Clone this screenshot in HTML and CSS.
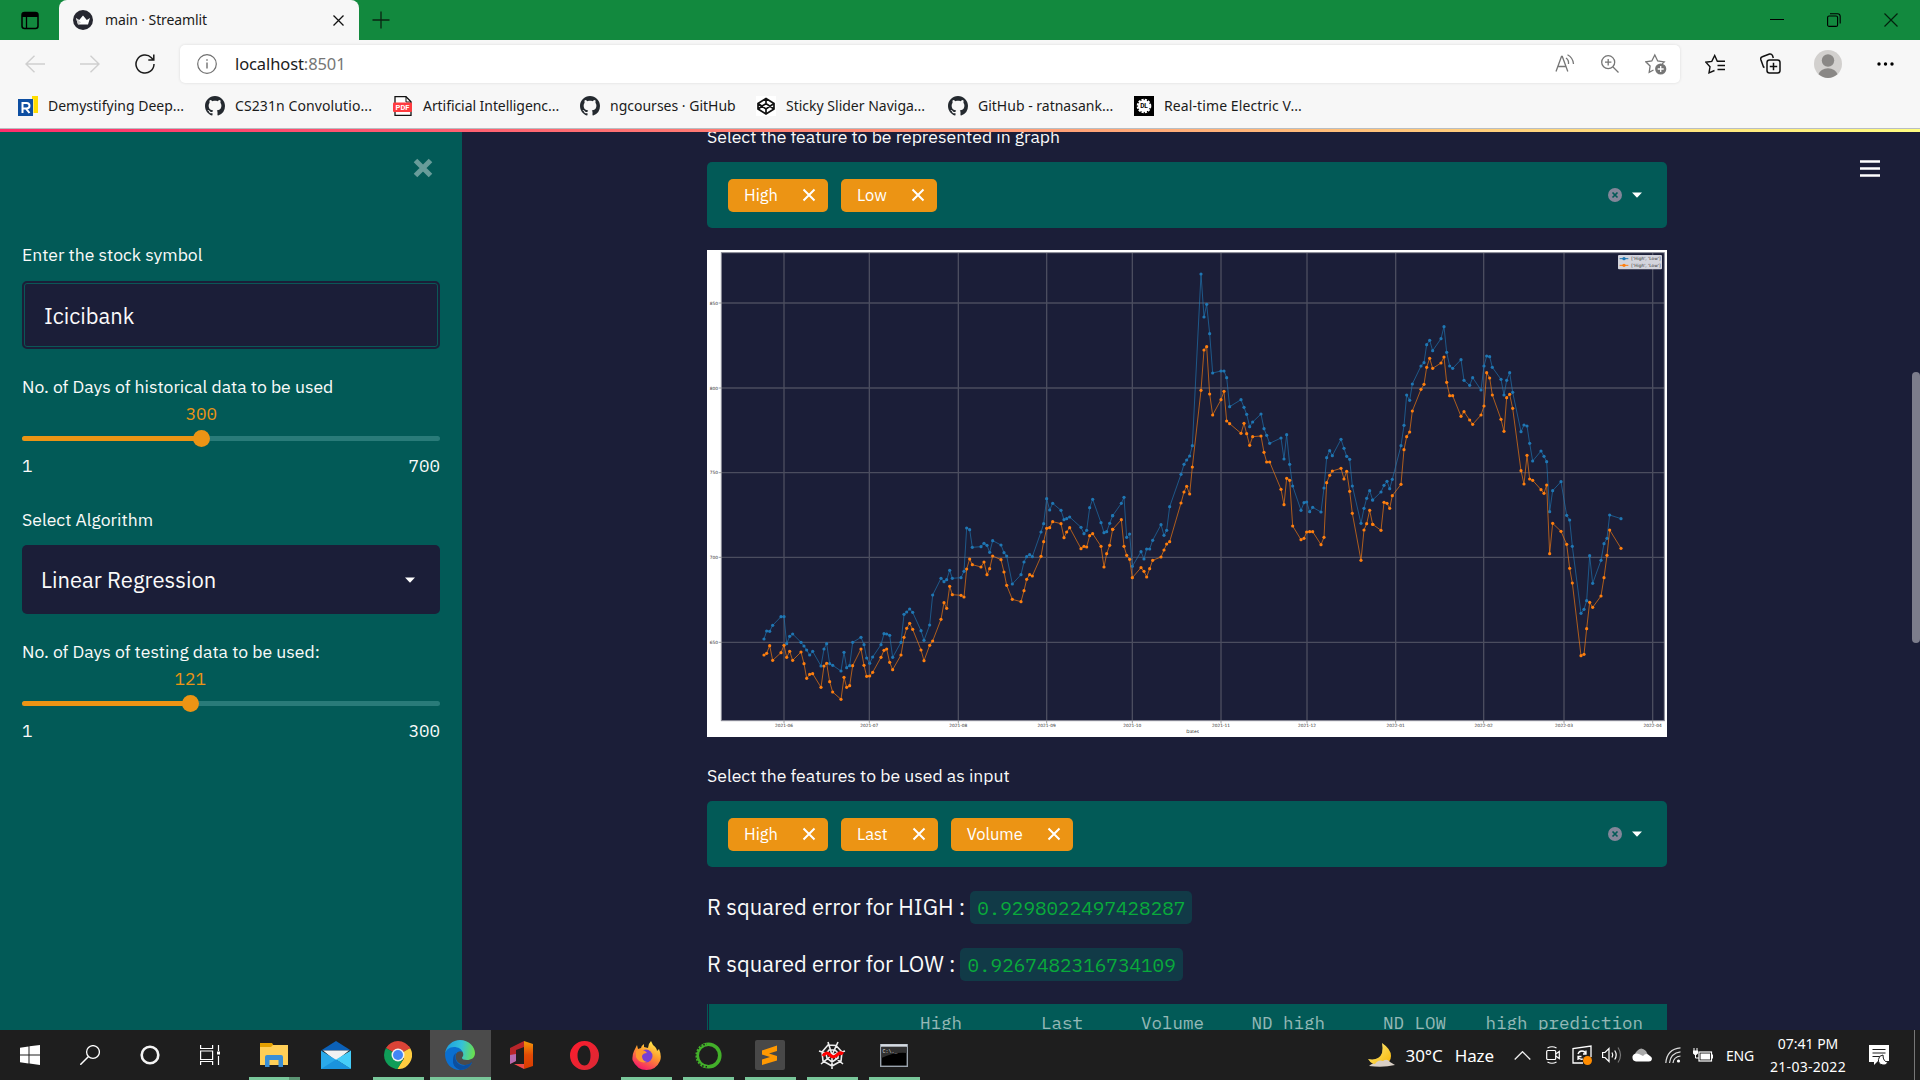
FILE: index.html
```html
<!DOCTYPE html>
<html lang="en">
<head>
<meta charset="utf-8">
<title>main · Streamlit</title>
<link rel="stylesheet" href="styles.css">
</head>
<body>
<svg class="defs" width="0" height="0">
  <defs>
    <symbol id="github" viewBox="0 0 16 16"><path fill="#24292f" d="M8 0C3.58 0 0 3.58 0 8c0 3.54 2.29 6.53 5.47 7.59.4.07.55-.17.55-.38 0-.19-.01-.82-.01-1.49-2.01.37-2.53-.49-2.69-.94-.09-.23-.48-.94-.82-1.13-.28-.15-.68-.52-.01-.53.63-.01 1.08.58 1.23.82.72 1.21 1.87.87 2.33.66.07-.52.28-.87.51-1.07-1.78-.2-3.64-.89-3.64-3.95 0-.87.31-1.59.82-2.15-.08-.2-.36-1.02.08-2.12 0 0 .67-.21 2.2.82.64-.18 1.32-.27 2-.27s1.36.09 2 .27c1.53-1.04 2.2-.82 2.2-.82.44 1.1.16 1.92.08 2.12.51.56.82 1.27.82 2.15 0 3.07-1.87 3.75-3.65 3.95.29.25.54.73.54 1.48 0 1.07-.01 1.93-.01 2.2 0 .21.15.46.55.38A8.01 8.01 0 0 0 16 8c0-4.42-3.58-8-8-8z"/></symbol>
    <symbol id="cross" viewBox="0 0 14 14"><path d="M1.500 1.500l11 11M12.500 1.500l-11 11" stroke="#fff" stroke-width="2" fill="none"/></symbol>
    <symbol id="clear" viewBox="0 0 14 14"><circle cx="7" cy="7" r="7" fill="#838699"/><path d="M4.500 4.500l5 5M9.500 4.500l-5 5" stroke="#025a57" stroke-width="1.700"/></symbol>
    <marker id="dot-high" markerUnits="userSpaceOnUse" markerWidth="12" markerHeight="12" refX="6" refY="6"><circle cx="6" cy="6" r="4.800" fill="#1f77b4"/></marker>
    <marker id="dot-low" markerUnits="userSpaceOnUse" markerWidth="12" markerHeight="12" refX="6" refY="6"><circle cx="6" cy="6" r="4.800" fill="#ff7f0e"/></marker>
    <linearGradient id="edge-a" x1="0" y1="0.3" x2="1" y2="0.4"><stop offset="0" stop-color="#1b9de2"/><stop offset=".55" stop-color="#35c1d8"/><stop offset="1" stop-color="#6ae04d"/></linearGradient>
    <linearGradient id="fire" x1="0.8" y1="0" x2="0.3" y2="1"><stop offset="0" stop-color="#fff44f"/><stop offset=".45" stop-color="#ff9a2e"/><stop offset="1" stop-color="#f5156c"/></linearGradient>
    <linearGradient id="office-g" x1="0" y1="0" x2="0" y2="1"><stop offset="0" stop-color="#f59a0a"/><stop offset=".5" stop-color="#e24a05"/><stop offset="1" stop-color="#d83b01"/></linearGradient>
    <linearGradient id="opera-g" x1="0" y1="0" x2="1" y2="1"><stop offset="0" stop-color="#ff1b2d"/><stop offset="1" stop-color="#d92a35"/></linearGradient>
    <linearGradient id="moon-g" x1="0" y1="0" x2="1" y2="1"><stop offset="0" stop-color="#fff08a"/><stop offset="1" stop-color="#f7b500"/></linearGradient>
  </defs>
</svg>

<header class="browser">
  <div class="titlebar">
    <div class="workspaces"><svg width="18" height="19" viewBox="0 0 18 19"><rect x="1" y="1.500" width="16" height="16" rx="2.500" fill="none" stroke="#000" stroke-width="1.500"/><path d="M1 6V3.500Q1 1.500 3.500 1.500h11q2.500 0 2.500 2.500V6z"/><path d="M5.500 6v11" stroke="#000" stroke-width="1.300"/></svg></div>
    <div class="tab">
      <svg width="20" height="20" viewBox="0 0 20 20"><circle cx="10" cy="10" r="10" fill="#262730"/><path d="M3 8l3.200 2L10 5.500l3.800 4.500L17 8l-2 6.500H5z" fill="#fff"/><path d="M5 14.500L3 8l5 4.500z" fill="#ccc"/></svg>
      <span class="tab-title">main · Streamlit</span>
      <svg class="tab-x" width="11" height="11" viewBox="0 0 11 11"><path d="M.5.5l10 10M10.500.5l-10 10" stroke="#111" stroke-width="1.300"/></svg>
    </div>
    <svg class="new-tab" width="18" height="18" viewBox="0 0 18 18"><path d="M9 .5v17M.5 9h17" stroke="#0a2412" stroke-width="1.300"/></svg>
    <div class="win-buttons">
      <svg width="14" height="14" viewBox="0 0 14 14"><path d="M0 6.500h14" stroke="#000" stroke-width="1"/></svg>
      <svg width="14" height="14" viewBox="0 0 14 14"><rect x=".6" y="3" width="10" height="10.400" rx="1.500" fill="none" stroke="#000" stroke-width="1.100"/><path d="M3 .7h7.500q2.700 0 2.700 2.800v7" fill="none" stroke="#000" stroke-width="1.100"/></svg>
      <svg width="14" height="14" viewBox="0 0 14 14"><path d="M.5.5l13 13M13.500.5l-13 13" stroke="#03210d" stroke-width="1.200"/></svg>
    </div>
  </div>
  <div class="toolbar">
    <svg class="nav" width="20" height="18" viewBox="0 0 20 18"><path d="M20 9H1M9.500.7L1 9l8.500 8.300" fill="none" stroke="#cfcfcf" stroke-width="1.400"/></svg>
    <svg class="nav" width="20" height="18" viewBox="0 0 20 18"><path d="M0 9h19M10.500.7L19 9l-8.500 8.300" fill="none" stroke="#cfcfcf" stroke-width="1.400"/></svg>
    <svg class="nav" width="20" height="20" viewBox="0 0 20 20"><path d="M19 10a9 9 0 1 1-2.600-6.300L18.500 6M18.800.5V6H13.300" fill="none" stroke="#1b1b1b" stroke-width="1.500"/></svg>
    <div class="address">
      <svg width="20" height="20" viewBox="0 0 20 20"><circle cx="10" cy="10" r="9.300" fill="none" stroke="#707070" stroke-width="1.200"/><path d="M10 8.500v6M10 5.200v1.600" stroke="#707070" stroke-width="1.400"/></svg>
      <span class="url">localhost<i>:8501</i></span>
      <svg width="20" height="19" viewBox="0 0 20 19" fill="none" stroke="#767676" stroke-width="1.300"><path d="M1 17.500L6.500 2.500h.8l5.500 15M3 12.500h8M11 4q3 2 2.500 6M12.500.8q5.500 3 6 9.200"/></svg>
      <svg width="18" height="18" viewBox="0 0 18 18" fill="none" stroke="#767676" stroke-width="1.300"><circle cx="7.200" cy="7.200" r="6.500"/><path d="M12 12l5.500 5.500M7.200 4v6.400M4 7.200h6.400"/></svg>
      <svg width="22" height="22" viewBox="0 0 22 22"><path d="M8.500 17l-4.300 2.300.9-6.200L.8 8.800l6-.8L9.800 2l2.900 6 6.500.9-2 2" fill="none" stroke="#767676" stroke-width="1.300"/><circle cx="15.700" cy="16" r="5.600" fill="#767676"/><path d="M15.700 13v6M12.700 16h6" stroke="#fff" stroke-width="1.300"/></svg>
    </div>
    <svg class="act fav" width="20" height="20" viewBox="0 0 20 20" fill="none" stroke="#111" stroke-width="1.400"><path d="M9.500 16.500L4 18.800l1-6L.8 8.200l6-.8L9.700 1.500l2.600 5.700H20M12.500 11.500H20M12.500 15.500H20"/></svg>
    <svg class="act coll" width="21" height="21" viewBox="0 0 21 21" fill="none" stroke="#111" stroke-width="1.500"><path d="M4.500 14.500L3.500 14 .8 6.500q-.5-2 1.500-2.700L9.500 1q2-.5 3 1.500l.8 2.500"/><rect x="7" y="7" width="13" height="13" rx="2.500"/><path d="M13.500 9.800v7.400M9.800 13.500h7.400"/></svg>
    <svg class="act prof" width="28" height="28" viewBox="0 0 28 28"><circle cx="14" cy="14" r="14" fill="#d2d0ce"/><circle cx="14" cy="10.500" r="6.200" fill="#8a8886"/><path d="M4.500 24.300a9.700 7.500 0 0 1 19 0Q19 28 14 28t-9.500-3.700z" fill="#8a8886"/></svg>
    <svg class="act more" width="17" height="4" viewBox="0 0 17 4"><circle cx="2" cy="2" r="1.700"/><circle cx="8.500" cy="2" r="1.700"/><circle cx="15" cy="2" r="1.700"/></svg>
  </div>
  <nav class="bookmarks">
    <a><svg width="20" height="20" viewBox="0 0 20 20"><path fill="#0d4ea2" d="M0 3h15v17H0z"/><path fill="#ffdd00" d="M14 0h6v17h-4.500V3H14z"/><path d="M4.500 17V7h4q3 0 3 2.800t-3 2.800h-3M8 12.600l3.500 4.400" stroke="#fff" stroke-width="2" fill="none"/></svg><span>Demystifying Deep...</span></a>
    <a><svg width="20" height="20"><use href="#github"/></svg><span class="wide">CS231n Convolutio...</span></a>
    <a><svg width="20" height="20" viewBox="0 0 20 20"><path d="M2 .7h11l5 5v13.600H2z" fill="#fff" stroke="#111" stroke-width="1.300"/><path d="M13 .7V6h5" fill="none" stroke="#111"/><rect y="6.500" width="19" height="9.500" rx="1" fill="#ff3b3f"/><text x="9.500" y="14" class="pdf">PDF</text></svg><span class="narrow">Artificial Intelligenc...</span></a>
    <a><svg width="20" height="20"><use href="#github"/></svg><span>ngcourses · GitHub</span></a>
    <a><svg width="20" height="20" viewBox="0 0 20 20"><rect width="20" height="20" fill="#fff"/><path d="M10 2.500l8 5v5.500l-8 5-8-5V7.500zM10 2.500v5M10 13v5M2 7.500l8 5.500 8-5.500M2 13l8-5.500L18 13" fill="none" stroke="#111" stroke-width="1.700"/></svg><span>Sticky Slider Naviga...</span></a>
    <a><svg width="20" height="20"><use href="#github"/></svg><span>GitHub - ratnasank...</span></a>
    <a><svg width="20" height="20" viewBox="0 0 20 20"><rect width="20" height="20"/><circle cx="10" cy="10" r="6" fill="#fff"/><circle cx="10" cy="10" r="6.300" fill="none" stroke="#fff" stroke-width="2" stroke-dasharray="2.200 1.100"/><text x="10" y="12.400" class="dl">DL</text></svg><span class="wide">Real-time Electric V...</span></a>
  </nav>
</header>

<div class="app">
  <div class="decoration"></div>
  <aside class="sidebar">
    <svg class="close" width="20" height="20" viewBox="0 0 20 20"><path d="M2.500 2.500l15 15M17.500 2.500l-15 15" stroke="#689c9a" stroke-width="5"/></svg>
    <div class="field first">
      <div class="label">Enter the stock symbol</div>
      <div class="input">Icicibank</div>
    </div>
    <div class="field slider-field">
      <div class="label">No. of Days of historical data to be used</div>
      <div class="slider"><div class="fill" style="width:42.800%"><b>300</b></div></div>
      <div class="ticks"><span>1</span><span>700</span></div>
    </div>
    <div class="field select-field">
      <div class="label">Select Algorithm</div>
      <div class="select"><span>Linear Regression</span><svg width="10" height="6" viewBox="0 0 10 6"><path d="M0 .5h10L5 5.800z" fill="#fff"/></svg></div>
    </div>
    <div class="field slider-field">
      <div class="label">No. of Days of testing data to be used:</div>
      <div class="slider"><div class="fill" style="width:40.200%"><b>121</b></div></div>
      <div class="ticks"><span>1</span><span>300</span></div>
    </div>
  </aside>
  <main class="main">
    <div class="label top">Select the feature to be represented in graph</div>
    <div class="multi">
      <span class="tag"><span>High</span><svg width="14" height="14"><use href="#cross"/></svg></span>
      <span class="tag"><span>Low</span><svg width="14" height="14"><use href="#cross"/></svg></span>
      <span class="multi-end"><svg width="14" height="14"><use href="#clear"/></svg><svg width="10" height="6" viewBox="0 0 10 6"><path d="M0 .5h10L5 5.800z" fill="#fff"/></svg></span>
    </div>
    <svg class="chart" width="960" height="487" viewBox="0 0 2880 1461">
      <rect width="2880" height="1461" fill="#fff"/>
      <rect x="43" y="8" width="2829" height="1404" fill="#1b1e38" stroke="#8b8c98" stroke-width="3"/>
      <path class="grid" d="M231 8V1412M487 8V1412M754 8V1412M1019 8V1412M1276 8V1412M1542 8V1412M1800 8V1412M2066 8V1412M2330 8V1412M2571 8V1412M2837 8V1412M43 159H2872M43 414H2872M43 668H2872M43 922H2872M43 1177H2872"/>
      <path class="tick" d="M231 1412v8M487 1412v8M754 1412v8M1019 1412v8M1276 1412v8M1542 1412v8M1800 1412v8M2066 1412v8M2330 1412v8M2571 1412v8M2837 1412v8M35 159h8M35 414h8M35 668h8M35 922h8M35 1177h8"/>
      <g class="ylab"><text x="33" y="164">850</text><text x="33" y="419">800</text><text x="33" y="673">750</text><text x="33" y="927">700</text><text x="33" y="1182">650</text></g>
      <g class="xlab"><text x="231" y="1431">2021-06</text><text x="487" y="1431">2021-07</text><text x="754" y="1431">2021-08</text><text x="1019" y="1431">2021-09</text><text x="1276" y="1431">2021-10</text><text x="1542" y="1431">2021-11</text><text x="1800" y="1431">2021-12</text><text x="2066" y="1431">2022-01</text><text x="2330" y="1431">2022-02</text><text x="2571" y="1431">2022-03</text><text x="2837" y="1431">2022-04</text><text x="1457" y="1449">Dates</text></g>
      <g transform="translate(-21 600)">
        <polyline class="high" points="192,567 200,543 209,544 218,526 243,500 252,500 260,581 269,559 278,552 303,577 312,588 320,600 329,615 338,604 363,648 372,597 380,581 389,641 398,646 423,663 432,607 440,653 449,647 458,577 483,562 492,584 500,624 509,640 518,621 543,584 552,551 560,552 569,556 578,622 603,577 612,493 620,486 629,477 638,487 663,542 672,571 689,525 698,435 723,385 732,395 740,389 749,361 757,385 783,383 792,364 800,234 809,239 817,292 843,290 852,280 861,286 869,307 878,272 903,285 912,308 920,318 937,402 963,374 972,336 980,320 989,314 997,320 1023,246 1031,221 1040,146 1049,180 1058,160 1083,181 1092,209 1100,206 1109,201 1143,232 1152,251 1160,241 1169,173 1178,148 1203,218 1212,248 1220,245 1229,220 1238,197"/>
        <polyline class="low" points="192,615 200,610 209,587 218,631 243,608 252,586 260,622 269,604 278,631 303,606 312,641 320,685 329,673 338,671 363,712 372,648 380,640 389,695 398,726 423,748 432,682 440,712 449,707 458,647 483,597 492,646 500,679 509,678 518,667 543,622 552,601 560,597 569,637 578,659 603,615 612,562 620,535 629,520 638,538 663,600 672,632 689,586 698,573 723,508 732,458 740,475 749,409 757,434 783,436 792,441 800,357 809,327 817,344 843,351 852,336 861,374 869,356 878,318 903,329 912,366 920,406 937,448 963,455 972,422 980,388 989,374 997,378 1023,319 1031,275 1040,235 1049,233 1058,215 1083,221 1092,263 1100,246 1109,233 1143,296 1152,289 1160,291 1169,257 1178,251 1203,289 1212,351 1220,311 1229,286 1238,238"/>
      </g>
      <g transform="translate(1119 -15)">
        <polyline class="high" points="98,812 124,775 132,757 140,877 149,867 157,964 183,920 192,942 200,912 209,912 218,886 243,839 252,871 260,856 269,785 303,688 312,658 320,645 329,633 337,602 363,87 372,216 380,178 389,266 398,384 423,378 432,378 440,398 449,485 483,464 492,487 500,508 509,545 518,531 543,507 552,551 560,571 569,595 603,579 612,642 620,569 629,658 638,723 663,796 672,773 680,771 689,800 698,787 723,801 732,729 740,638 749,617 757,632 783,583 792,610 800,634 809,643 817,723 843,835 852,790 860,760 869,737 878,765"/>
        <polyline class="low" points="98,853 124,824 132,904 140,931 149,943 157,998 183,968 192,979 200,996 209,971 218,946 243,936 252,915 260,897 269,890 303,774 312,741 320,724 329,747 337,666 363,436 372,315 380,305 389,447 398,510 423,464 432,439 440,528 449,536 483,565 492,535 500,566 509,601 518,575 543,573 552,622 560,651 569,651 603,733 612,779 620,700 629,706 638,843 663,884 672,880 680,861 689,860 698,860 723,899 732,877 740,713 749,691 757,678 783,670 792,702 800,679 809,739 817,805 843,946 852,855 860,836 869,796 878,838"/>
      </g>
      <g transform="translate(1989 -15)">
        <polyline class="high" points="8,765 33,741 42,721 51,709 59,731 67,703 93,602 102,541 110,450 119,466 127,417 153,363 162,353 170,299 179,286 188,317 213,281 222,245 230,322 239,363 248,370 273,344 282,406 299,421 308,398 333,435 342,363 350,333 359,335 367,367 393,403 402,450 410,406 419,383 428,442 453,560 462,540 471,543 479,595 488,648 513,618 522,634 530,650 539,800 548,737 573,710 590,811 599,825 607,904 633,1105 642,1093 650,1067 659,932 668,1015 693,946 702,896 711,880 719,810 753,821"/>
        <polyline class="low" points="8,838 33,856 42,772 51,775 59,790 67,752 93,718 102,614 110,575 119,561 127,498 153,433 162,418 170,367 179,340 188,370 213,354 222,336 230,412 239,452 248,452 273,514 282,500 299,525 308,538 333,510 342,483 350,383 359,399 367,450 393,523 402,559 410,458 419,448 428,490 453,677 462,717 471,631 479,702 488,706 513,734 522,745 530,720 539,926 548,835 573,859 590,898 599,970 607,1014 633,1232 642,1228 650,1151 659,1072 668,1087 693,1053 702,998 711,931 719,855 753,910"/>
      </g>
      <rect x="2733" y="15" width="132" height="43" rx="3" fill="#d3d4dc"/>
      <path d="M2738 26h26" stroke="#1f77b4" stroke-width="3"/><circle cx="2751" cy="26" r="5" fill="#1f77b4"/>
      <path d="M2738 46h26" stroke="#ff7f0e" stroke-width="3"/><circle cx="2751" cy="46" r="5" fill="#ff7f0e"/>
      <g class="legend"><text x="2773" y="31">['High', 'Low']</text><text x="2773" y="51">['High', 'Low']</text></g>
    </svg>
    <div class="label second">Select the features to be used as input</div>
    <div class="multi">
      <span class="tag"><span>High</span><svg width="14" height="14"><use href="#cross"/></svg></span>
      <span class="tag"><span>Last</span><svg width="14" height="14"><use href="#cross"/></svg></span>
      <span class="tag"><span>Volume</span><svg width="14" height="14"><use href="#cross"/></svg></span>
      <span class="multi-end"><svg width="14" height="14"><use href="#clear"/></svg><svg width="10" height="6" viewBox="0 0 10 6"><path d="M0 .5h10L5 5.800z" fill="#fff"/></svg></span>
    </div>
    <p class="result"><span>R squared error for HIGH :</span><code>0.9298022497428287</code></p>
    <p class="result"><span>R squared error for LOW :</span><code>0.9267482316734109</code></p>
    <div class="table"><span></span><span>High</span><span>Last</span><span>Volume</span><span>ND high</span><span>ND LOW</span><span>high prediction</span></div>
  </main>
  <div class="menu"><svg width="20" height="18" viewBox="0 0 20 18"><path d="M0 1.500h20M0 8.500h20M0 15.500h20" stroke="#fff" stroke-width="2.500"/></svg></div>
  <div class="scrollbar"></div>
</div>

<footer class="taskbar">
  <div class="sys"><svg width="20" height="20" viewBox="0 0 20 20"><path fill="#fff" d="M0 2.800l8.500-1.300v8H0zM9.500 1.300L20 0v9.500H9.500zM0 10.500h8.500v8L0 17.200zM9.500 10.500H20V20L9.500 18.600z"/></svg></div>
  <div class="sys"><svg width="20" height="20" viewBox="0 0 20 20"><circle cx="13" cy="7" r="6.400" fill="none" stroke="#fff" stroke-width="1.300"/><path d="M8.500 11.500L.3 19.700" stroke="#fff" stroke-width="1.500"/></svg></div>
  <div class="sys"><svg width="20" height="20" viewBox="0 0 20 20"><circle cx="10" cy="10" r="8.300" fill="none" stroke="#f4f4f4" stroke-width="2.600"/></svg></div>
  <div class="sys"><svg width="20" height="20" viewBox="0 0 20 20"><path d="M.6 0v3.500h12V0M.6 20v-3.500h12V20M.6 6h12v8.500H.6zM18.500 0v6M18.500 11v9" fill="none" stroke="#fff" stroke-width="1.200"/><path fill="#fff" d="M17 6.500h3v3h-3z"/></svg></div>
  <div class="apps">
    <div class="run multi-win"><svg width="28" height="24" viewBox="0 0 28 24"><path fill="#e3a000" d="M0 0h12l2 3v3H0z"/><path fill="#ffcf57" d="M0 4h11l2-2h15v20H0z"/><path fill="#3a8fd6" d="M5 24V14q0-2 2-2h14q2 0 2 2v10h-4.500v-7h-9v7z"/></svg></div>
    <div><svg width="30" height="28" viewBox="0 0 30 28"><path fill="#0b61b8" d="M0 9.500L15 0l15 9.500z"/><path fill="#f2f2f2" d="M2 9.500h26L15 20z"/><path fill="#2aa9ea" d="M0 9.500l30 18.500H0z"/><path fill="#46cdf8" d="M30 9.500V28L15 18.500z"/><path fill="#1a93dd" d="M0 28l15-9.500L30 28z"/></svg></div>
    <div class="run"><svg width="28" height="28" viewBox="0 0 28 28"><path fill="#db4437" d="M14 14L1.900 7A14 14 0 0 1 26.100 7z"/><path fill="#0f9d58" d="M14 14L14 28A14 14 0 0 1 1.900 7z"/><path fill="#ffcd40" d="M14 14L26.100 7A14 14 0 0 1 13 28L20 17.500z"/><path fill="#db4437" d="M14 7.500h12.300L25 5H14z"/><path fill="#0f9d58" d="M19.700 17.200L13.500 28 11 27.700 14 20z"/><circle cx="14" cy="14" r="6.500" fill="#f1f1f1"/><circle cx="14" cy="14" r="5" fill="#4285f4"/></svg></div>
    <div class="run active"><svg width="30" height="30" viewBox="0 0 30 30"><path fill="#0a6fd0" d="M0 14Q2 6 10 6q7 1 8 6-5-2-7 2c-2 6 3 11 9 11q4 0 7-2-4 7-12 7C6 30 0 23 0 14z"/><path fill="#0c4f9e" d="M11 13c-3 8 4 14 10 12q4-1 6.500-3.500Q24 30 15 30q-8-3-7-10 0-5 3-7z"/><path fill="url(#edge-a)" d="M0 14C1 5 8 0 15 0c9 0 15 7 15 13 0 5-4 7-8 7-3 0-5-1-5-2s2-2 1-5c-1-4-5-6-9-6-5 0-8 3-9 7z"/></svg></div>
    <div><svg width="24" height="28" viewBox="0 0 24 28"><path fill="url(#office-g)" d="M14 0l9 3v22l-9 3z"/><path fill="#b8252a" d="M14 0v6L6 9v11l-6 3V7z"/><path fill="#b56bb0" d="M0 14l6-1v7l-6 3z"/><path fill="#ee4a4a" d="M4 23h10v5z"/></svg></div>
    <div><svg width="29" height="29" viewBox="0 0 29 29"><path fill="url(#opera-g)" fill-rule="evenodd" d="M14.500 0a14.500 14.500 0 1 0 0 29 14.500 14.500 0 1 0 0-29zm0 4.500c4 0 6 4.500 6 10s-2 10-6 10-7-4.500-7-10 3-10 7-10z"/></svg></div>
    <div class="run"><svg width="29" height="29" viewBox="0 0 29 29"><path fill="url(#fire)" d="M5 4l1 4 3-1q0-2 3-4v3l4 1q0-4 3-7l2 4q4 3 4 6l2-2q3 7 1 12-4 9-13.500 9T.5 19Q0 14 2 10z"/><circle cx="14" cy="15" r="6.500" fill="#7a3fd4"/><path fill="#ff9a2e" d="M4 10q4-3 9 0l2 2q-4 0-5 3 0 5 5 6-8 2-11-5z"/></svg></div>
    <div class="run"><svg width="27" height="27" viewBox="0 0 27 27"><circle cx="13.500" cy="13.500" r="11.300" fill="none" stroke="#43b02a" stroke-width="3.600"/><path d="M12 24.800A11.300 11.300 0 0 1 12 2.200" fill="none" stroke="#1e1e1e" stroke-width="1.600" stroke-dasharray="1.500 2"/></svg></div>
    <div class="run"><svg width="30" height="30" viewBox="0 0 30 30"><rect width="30" height="30" rx="2" fill="#484848"/><path fill="#ff9800" d="M7 10.500L22 5.500v5.500l-8 2.500 8 2.500v4.500L7 25v-5.500l8-2.500-8-2.500z"/></svg></div>
    <div class="run"><svg width="28" height="28" viewBox="0 0 28 28"><path d="M14 14L10 1M14 14l6-13M14 14l13-4M14 14l11 9M14 14v14M14 14L3 23M14 14L1 10M10 4l8 .5 6 6.500-1 9-9 5-9-5-1-9zM11 9l6 0 3 3v5l-6 4-5-4-1-4z" fill="none" stroke="#eee" stroke-width="1.600"/><path d="M5 15q3-5 7-1t8-1q3-2 5 0" fill="none" stroke="#f00" stroke-width="3.200"/></svg></div>
    <div class="run"><svg width="28" height="23" viewBox="0 0 28 23"><rect x=".7" y=".7" width="26.600" height="21.600" fill="#000" stroke="#9aa3ad" stroke-width="1.400"/><path d="M1 1.500h26" stroke="#d5dbe2" stroke-width="2.500"/><path d="M1.500 3h25v6Q14 8 1.500 14z" fill="#303030"/><text x="2.500" y="9" class="cmd">C:\._</text></svg></div>
  </div>
  <div class="tray">
    <svg width="29" height="25" viewBox="0 0 29 25"><path fill="url(#moon-g)" d="M15 0q9 6 9 13t-8 9q-10 2-15-6 11 2 14-6 1-5 0-10z"/><path fill="#d9cfc5" d="M2 23q3-3 6-2 3-5 8-3 4-3 7 1l5 3q-12 3-26 1z"/></svg>
    <span class="weather"><span>30°C</span><span>Haze</span></span>
    <svg class="chev" width="17" height="9" viewBox="0 0 17 9"><path d="M.7 8.500l7.800-7.800 7.800 7.800" fill="none" stroke="#eee" stroke-width="1.300"/></svg>
    <svg class="cam" width="14" height="18" viewBox="0 0 14 18" fill="none" stroke="#fff" stroke-width="1.200"><rect x=".7" y="4.500" width="9" height="9" rx="1"/><path d="M9.700 8l3.600-2.500v7L9.700 10M1.500 2q4.500-2.500 9 0M1.500 16q4.500 2.500 9 0"/></svg>
    <svg class="upd" width="20" height="20" viewBox="0 0 20 20"><path d="M11 18H1V3.500L19 1v11" fill="none" stroke="#fff" stroke-width="1.300"/><path d="M6 9q1-3 4-3t4 3M14 5.500V9h-3M6 15v-3.500h3.500M6 12q2 3 5 2" fill="none" stroke="#fff" stroke-width="1.300"/><circle cx="15.500" cy="15.500" r="4.500" fill="#ff8c00"/></svg>
    <svg class="spk" width="20" height="18" viewBox="0 0 20 18" fill="none" stroke="#fff" stroke-width="1.200"><path d="M.6 6.500H3l4-4v13l-4-4H.6zM10 6.500q1.500 2.500 0 5M12.700 4.500q3 4.500 0 9"/><path d="M16 1.500q5 7.500 0 15" stroke="#777"/></svg>
    <svg class="cloud" width="20" height="14" viewBox="0 0 20 14"><path fill="#a8a8a8" d="M4 10a5 5 0 0 1 1-7q4-5 9 0l2 4z"/><path fill="#fff" d="M4 13.500a4 4 0 0 1-1-7.700q2-.8 4 .2l4 2q3-4 7 0 2 1 2 3-.5 2.500-3 2.500z"/></svg>
    <svg class="wifi" width="16" height="16" viewBox="0 0 16 16" fill="none" stroke="#ddd" stroke-width="1.200"><path d="M.8 16Q2 2 15.500.8M4.500 16Q5.500 6 15.500 4.800M8 16q.5-6 7.500-7"/><circle cx="13.500" cy="14" r="1.600" fill="#fff" stroke="none"/></svg>
    <svg class="bat" width="20" height="14" viewBox="0 0 20 14"><rect x="6" y="4" width="12.500" height="9" fill="none" stroke="#fff" stroke-width="1.200"/><path fill="#fff" d="M7.500 5.500h9.500v6H7.500zM18.500 6.500H20v4h-1.500zM0 2.500h5v3L3.300 7H1.700L0 5.500z"/><path d="M1 0v3M4 0v3M2.500 6v4H6" fill="none" stroke="#fff"/></svg>
    <span class="lang">ENG</span>
    <span class="clock"><span>07:41 PM</span><span class="date">21-03-2022</span></span>
    <svg class="note" width="20" height="20" viewBox="0 0 20 20"><path fill="#fff" d="M0 0h20v16H9l-4 4v-3H0z"/><path d="M3.500 4.500h13M3.500 8h13M3.500 11.500h8" stroke="#1e1e1e" stroke-width="1.200"/><path d="M14 10a5 5 0 1 0 5 7q-5 0-5-7z" fill="#fff" stroke="#1e1e1e"/></svg>
    <i class="desk"></i>
  </div>
</footer>
</body>
</html>
```
FILE: styles.css
```css
* { box-sizing: border-box; }
body {
  margin: 0;
  width: 1920px;
  height: 1080px;
  overflow: hidden;
  display: flex;
  flex-direction: column;
  font-family: "IBM Plex Sans", "Open Sans", sans-serif;
  background: #1b1e38;
}
svg { display: block; flex: none; }
.defs { position: absolute; }

/* browser chrome */
.browser {
  flex: none;
  height: 129px;
  background: #f7f7f7;
  border-bottom: 1px solid #b9bec2;
  font-family: "Segoe UI", "Noto Sans", sans-serif;
  color: #1b1b1b;
}
.titlebar { display: flex; align-items: center; height: 40px; background: #12893e; }
.workspaces { width: 59px; padding-left: 21px; }
.tab {
  display: flex;
  align-items: center;
  width: 300px;
  height: 40px;
  padding: 0 15px 0 14px;
  background: #f7f7f7;
  border-radius: 8px 8px 0 0;
  font-size: 14px;
}
.tab-title { margin: 0 0 2px 12px; letter-spacing: -.1px; }
.tab-x { margin-left: auto; }
.new-tab { margin-left: 13px; }
.win-buttons { display: flex; gap: 43px; margin: 0 22px 0 auto; }
.toolbar { display: flex; align-items: center; height: 47px; padding-left: 25px; }
.nav { margin-right: 35px; }
.nav + .nav + .nav { margin-right: 25px; }
.address {
  display: flex;
  align-items: center;
  width: 1500px;
  height: 38px;
  padding: 0 13px 0 17px;
  background: #fff;
  border-radius: 5px;
  box-shadow: 0 0 3px rgba(0, 0, 0, .12);
}
.url { margin: 0 auto 1px 18px; font-size: 16.500px; letter-spacing: -.1px; }
.url i { font-style: normal; color: #767676; }
.address svg + svg { margin-left: 26px; }
.fav { margin-left: 25px; }
.coll { margin-left: 35px; }
.prof { margin-left: 33px; }
.more { margin-left: 35px; }
.bookmarks {
  display: grid;
  grid-template-columns: 187px 188px 187px 176px 192px 186px auto;
  height: 38px;
  align-items: center;
  padding-left: 18px;
  font-size: 14px;
  white-space: nowrap;
}
.bookmarks a { display: flex; align-items: center; gap: 10px; }
.bookmarks span { margin-bottom: 2px; }
.wide { letter-spacing: .1px; }
.narrow { letter-spacing: -.06px; }
.pdf { font: bold 7.500px "Roboto", sans-serif; fill: #fff; text-anchor: middle; }
.dl { font: bold 6.500px "Roboto", sans-serif; text-anchor: middle; }

/* page */
.app { position: relative; flex: none; height: 901px; display: flex; overflow: hidden; }
.decoration {
  position: absolute;
  top: 0;
  left: 0;
  right: 0;
  height: 3px;
  z-index: 2;
  background: linear-gradient(90deg, #ff2e6c, #fffd80);
}
.sidebar { flex: none; width: 462px; background: #025a57; padding: 29px 22px 0; color: #fafafa; }
.close { margin: 0 7px 0 auto; }
.label { font-size: 17.600px; line-height: 24px; height: 24px; color: #fafafa; }
.first { margin-top: 65px; }
.input {
  display: flex;
  align-items: center;
  height: 68px;
  margin-top: 14px;
  padding: 0 20px;
  background: #1b1e38;
  border: 2px solid #1b1e38;
  border-radius: 5px;
  box-shadow: inset 0 0 0 1px #0b5757;
  font-size: 22px;
}
.slider-field { margin-top: 26px; }
.slider { height: 5px; margin-top: 37px; border-radius: 3px; background: #297b79; }
.fill { position: relative; height: 5px; border-radius: 3px; background: #ec9414; }
.fill::after {
  content: "";
  position: absolute;
  right: -9px;
  top: -6px;
  width: 17px;
  height: 17px;
  border-radius: 50%;
  background: #ec9414;
}
.fill b {
  position: absolute;
  right: -16px;
  top: -32px;
  font: 17.500px/20px "IBM Plex Mono", "Liberation Mono", monospace;
  color: #ec9414;
}
.ticks {
  display: flex;
  justify-content: space-between;
  margin-top: 15px;
  font: 17.500px/20px "IBM Plex Mono", "Liberation Mono", monospace;
}
.select-field { margin-top: 32px; }
.select {
  display: flex;
  align-items: center;
  justify-content: space-between;
  height: 69px;
  margin-top: 13px;
  padding: 0 25px 0 19px;
  border-radius: 5px;
  background: #1b1e38;
  font-size: 22px;
}
.main { width: 960px; margin-left: 245px; }
.top { margin-top: -4px; }
.multi {
  display: flex;
  align-items: center;
  gap: 13px;
  height: 66px;
  margin-top: 13px;
  padding: 0 25px 0 21px;
  border-radius: 5px;
  background: #025a57;
}
.tag {
  display: flex;
  align-items: center;
  gap: 24px;
  height: 33px;
  padding: 0 12px 0 16px;
  border-radius: 5px;
  background: #ec9414;
  color: #fff;
  font-size: 16.500px;
}
.tag span { margin-bottom: 1px; }
.multi-end { display: flex; align-items: center; gap: 10px; margin-left: auto; }
.chart { margin-top: 22px; }
.grid { fill: none; stroke: #b0b0b0; stroke-opacity: .32; stroke-width: 4; }
.tick { stroke: #777; stroke-width: 2; }
.chart text { font-family: "DejaVu Sans", sans-serif; font-size: 13px; fill: #333; }
.ylab text { text-anchor: end; }
.xlab text { text-anchor: middle; }
.high, .low { fill: none; stroke-width: 2.600; stroke-opacity: .75; }
.high { stroke: #1f77b4; marker: url(#dot-high); }
.low { stroke: #ff7f0e; marker: url(#dot-low); }
.second { margin-top: 27px; }
.result { display: flex; align-items: center; gap: 5px; height: 33px; margin: 24px 0; color: #fafafa; font-size: 22px; }
.result span { margin-bottom: 2px; }
.result code {
  height: 33px;
  padding: 0 7px;
  border-radius: 5px;
  background: #113a47;
  color: #09ab3b;
  font: 19.300px/34px "IBM Plex Mono", "Liberation Mono", monospace;
}
.table {
  display: grid;
  grid-template-columns: 133px 121px 121px 121px 121px 121px 197px;
  height: 60px;
  margin-top: -1px;
  background: #025a57;
  border-left: 1px solid #025a57;
  box-shadow: inset 1px 0 #1b1e38;
  color: rgba(250, 250, 250, .6);
  font: 17.500px/38px "IBM Plex Mono", "Liberation Mono", monospace;
  text-align: right;
}
.menu { margin: 31px 0 0 193px; }
.scrollbar { position: absolute; right: 0; top: 243px; width: 8px; height: 271px; border-radius: 4px; background: #7c7d8c; }

/* taskbar */
.taskbar { display: flex; height: 50px; background: #1e1e1e; color: #fff; font-family: "Segoe UI", "Noto Sans", sans-serif; }
.sys { display: flex; width: 60px; justify-content: center; align-items: center; }
.apps { display: flex; margin-left: 3px; }
.apps > div { display: flex; width: 62px; justify-content: center; align-items: center; }
.run { background: linear-gradient(#79c79a, #79c79a) 6px 47px / 51px 3px no-repeat; }
.run.multi-win { background: linear-gradient(90deg, #79c79a 40px, #5b9473 40px) 6px 47px / 51px 3px no-repeat; }
.run.active { background: linear-gradient(#4b4b4b 47px, #79c79a 47px) 1px 0 / 61px 50px no-repeat; }
.tray { display: flex; align-items: center; margin-left: auto; }
.weather { display: flex; gap: 12px; margin-left: 10px; font-size: 17px; letter-spacing: -.1px; }
.chev { margin-left: 20px; }
.cam { margin-left: 15px; }
.upd { margin-left: 12px; }
.spk { margin-left: 10px; }
.cloud { margin-left: 10px; }
.wifi { margin-left: 13px; }
.bat { margin-left: 12px; }
.lang { width: 29px; margin-left: 13px; font-size: 14px; letter-spacing: -.2px; }
.clock { display: flex; flex-direction: column; align-items: center; width: 76px; margin-left: 15px; font-size: 14px; line-height: 23px; }
.date { letter-spacing: .28px; }
.note { margin-left: 23px; }
.desk { width: 1px; height: 50px; margin: 0 5px 0 25px; background: #777; }
.cmd { font: 5px "Liberation Mono", monospace; fill: #ddd; }
```
